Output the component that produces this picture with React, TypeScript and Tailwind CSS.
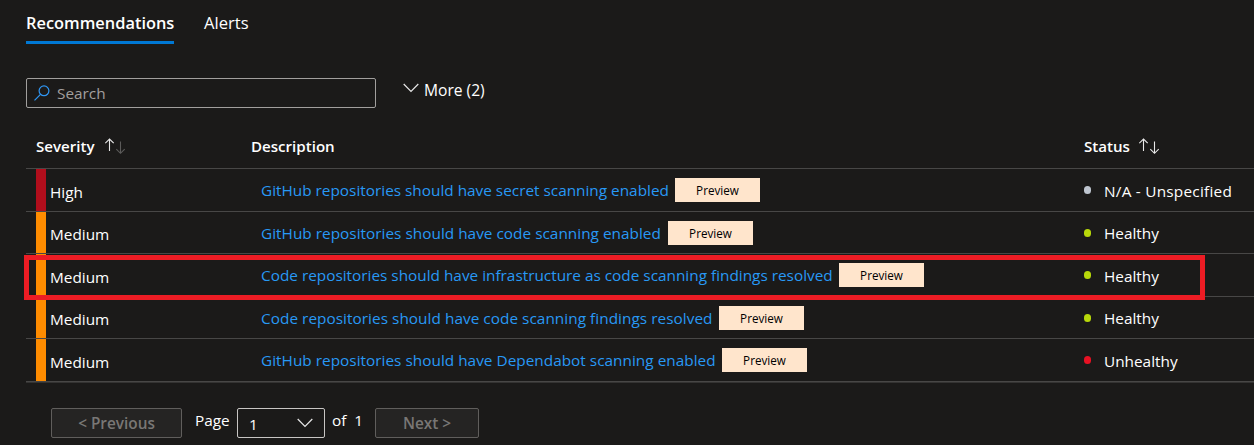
import React from "react";

type Row = {
  severity: string;
  bar: string;
  text: string;
  link: string;
  status: string;
  dot: string;
  height: string;
  severityTop: string;
  statusStyle: string;
};

const rows: Row[] = [
  { severity: "High", bar: "bg-[#b10e1c]", text: "GitHub repositories should have secret scanning enabled", link: "w-[414px]", status: "N/A - Unspecified", dot: "bg-[#bec5cf]", height: "h-[43px]", severityTop: "pt-[13px]", statusStyle: "pt-[12px] tracking-[0.24px]" },
  { severity: "Medium", bar: "bg-[#ff8c00]", text: "GitHub repositories should have code scanning enabled", link: "w-[407px] tracking-[0.02px]", status: "Healthy", dot: "bg-[#b8d80a]", height: "h-[42px]", severityTop: "pt-[12px]", statusStyle: "pt-[11px]" },
  { severity: "Medium", bar: "bg-[#ff8c00]", text: "Code repositories should have infrastructure as code scanning findings resolved", link: "w-[578px]", status: "Healthy", dot: "bg-[#b8d80a]", height: "h-[43px]", severityTop: "pt-[13px]", statusStyle: "pt-[12px]" },
  { severity: "Medium", bar: "bg-[#ff8c00]", text: "Code repositories should have code scanning findings resolved", link: "w-[458px] tracking-[0.04px]", status: "Healthy", dot: "bg-[#b8d80a]", height: "h-[42px]", severityTop: "pt-[12px]", statusStyle: "pt-[11px]" },
  { severity: "Medium", bar: "bg-[#ff8c00]", text: "GitHub repositories should have Dependabot scanning enabled", link: "w-[461px] tracking-[0.02px]", status: "Unhealthy", dot: "bg-[#e81123]", height: "h-[43px]", severityTop: "pt-[13px]", statusStyle: "pt-[12px]" },
];

function SortIcon({ dim = false }: { dim?: boolean }) {
  return (
    <svg width="21" height="18" viewBox="0 0 21 18" fill="none" strokeWidth="1.1" className="mt-px shrink-0">
      <path d="M4.5 14V2M0.3 6.2L4.5 2L8.7 6.2" stroke="#e8e8e8" />
      <path d="M15.5 4.5V16.3M11.3 12.1L15.5 16.3L19.7 12.1" stroke={dim ? "#5c5b5a" : "#e8e8e8"} />
    </svg>
  );
}

function Chevron() {
  return (
    <svg width="16" height="10" viewBox="0 0 16 10" fill="none" className="shrink-0">
      <path d="M0.7 1L8 8.3L15.3 1" stroke="#e8e8e8" strokeWidth="1.2" />
    </svg>
  );
}

export default function App() {
  return (
    <div className="h-[445px] w-[1254px] overflow-hidden whitespace-nowrap bg-[#1b1a19] font-['Open_Sans',sans-serif] text-[15.35px] leading-5 text-white">
      <nav className="flex h-11 pl-[26px] pt-[13px]">
        <div className="h-[31px] w-[148px] border-b-[3px] border-[#0078d4] text-[16.4px] font-semibold">Recommendations</div>
        <div className="ml-[30px] text-[16.6px]">Alerts</div>
      </nav>

      <div className="flex h-[82px] pl-[26px] pt-[34px]">
        <div className="flex h-[30px] w-[350px] items-center rounded-[2px] border border-[#a19f9d] pl-[7px] text-[#a19f9d]">
          <svg width="16" height="16" viewBox="0 0 16 16" fill="none" stroke="#2f96f3" strokeWidth="1.2">
            <circle cx="10" cy="5.8" r="4.9" />
            <path d="M6.5 9.3L0.5 15.3" />
          </svg>
          <span className="ml-[7px]">Search</span>
        </div>
        <div className="ml-[27px] flex h-5 items-start pt-[5px]">
          <Chevron />
          <span className="-mt-[3px] ml-[5px] text-[15.6px]">More (2)</span>
        </div>
      </div>

      <div className="relative ml-[26px] w-[1228px]">
        <div className="flex h-[43px] border-b border-[#484746] pl-[10px] pt-[10px] text-[15.1px] font-semibold">
          <div className="flex w-[215px]">
            <span className="w-[69px]">Severity</span>
            <SortIcon dim />
          </div>
          <div className="w-[833px]">Description</div>
          <div className="flex">
            <span className="w-[55px]">Status</span>
            <SortIcon />
          </div>
        </div>
        {rows.map((row) => (
          <div key={row.text} className={`flex border-b border-[#484746] pl-[10px] ${row.height}`}>
            <div className={`w-[10px] ${row.bar}`} />
            <div className={`w-[215px] pl-1 ${row.severityTop}`}>{row.severity}</div>
            <div className="flex w-[823px] text-[#2899f5]">
              <div className={`pt-[11px] ${row.link}`}>{row.text}</div>
              <div className="mt-[9px] flex h-6 w-[85px] items-center justify-center bg-[#ffe5cc] text-[11.7px] text-black">Preview</div>
            </div>
            <div className="flex">
              <i className={`mt-[17px] h-2 w-[7px] rounded-full ${row.dot}`} />
              <span className={`ml-[13px] ${row.statusStyle}`}>{row.status}</span>
            </div>
          </div>
        ))}
        <div className="h-px bg-[#343332]" />
        <div className="absolute -left-[2px] top-[129px] h-[45px] w-[1181px] border-[5px] border-[#ed1c24]" />
      </div>

      <div className="flex pl-[51px] pt-[25px]">
        <div className="flex h-[30px] w-[131px] items-center justify-center rounded-[2px] border border-[#605e5c] bg-[#252423] pb-px font-semibold text-[#797775]">&lt; Previous</div>
        <span className="ml-[13px] w-[42px] pt-[2px]">Page</span>
        <div className="flex h-[30px] w-[88px] items-center justify-between rounded-[2px] border border-[#c8c6c4] px-[11px]">
          <span className="pt-[2px]">1</span>
          <Chevron />
        </div>
        <span className="ml-[7px] w-[43px] pt-[2px]">of&nbsp; 1</span>
        <div className="flex h-[30px] w-[104px] items-center justify-center rounded-[2px] border border-[#605e5c] bg-[#252423] pb-px font-semibold text-[#797775]">Next &gt;</div>
      </div>
    </div>
  );
}
